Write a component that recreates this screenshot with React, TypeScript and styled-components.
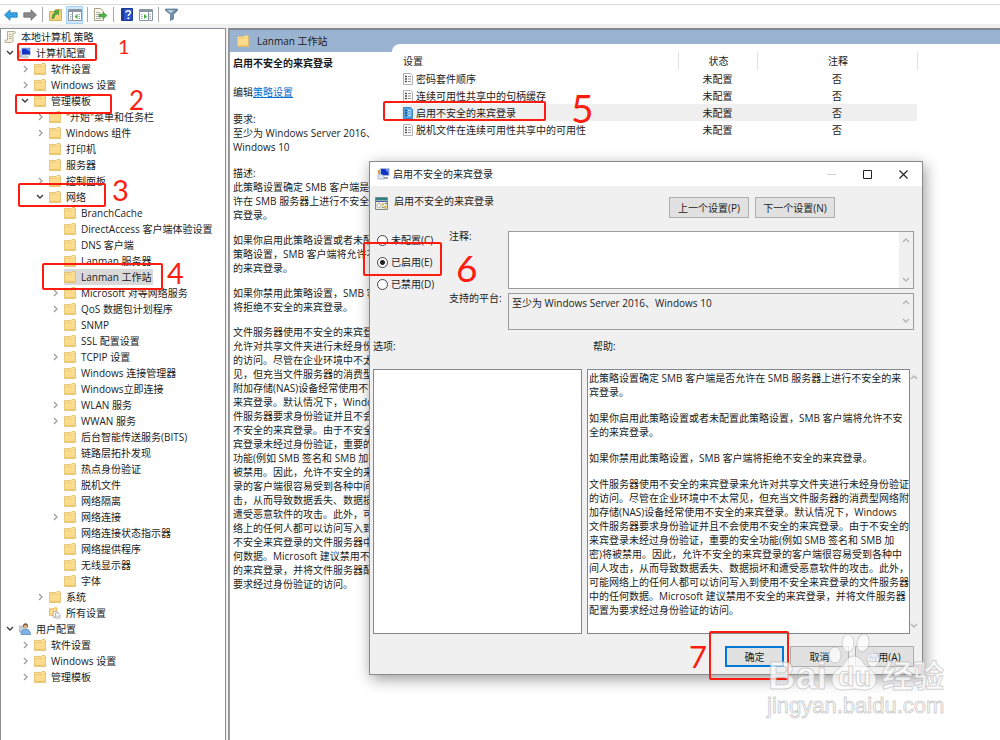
import React from 'react';
import styled, { createGlobalStyle, css } from 'styled-components';

const GlobalStyle = createGlobalStyle`
  * { box-sizing: border-box; }
  html, body { margin: 0; }
  body {
    background: #fff;
    color: #1b1b1b;
    font: 10px/14px 'Open Sans', 'Noto Sans CJK SC', sans-serif;
  }
  button, textarea, input { font: inherit; color: inherit; margin: 0; }
`;

const Page = styled.div`
  position: relative;
  display: flex;
  flex-direction: column;
  min-height: 100vh;
  overflow: hidden;
`;

/* ---------- toolbar ---------- */

const MenuEdge = styled.div`
  height: 5px;
  border-bottom: 1px solid #d9d9d9;
`;

const Toolbar = styled.div`
  display: flex;
  align-items: center;
  gap: 4px;
  height: 19px;
  padding-left: 2px;
`;

const ToolButton = styled.button<{ $active?: boolean }>`
  display: flex;
  align-items: center;
  justify-content: center;
  width: 17px;
  height: 18px;
  padding: 0;
  border: 1px solid ${(p) => (p.$active ? '#a6d3f7' : 'transparent')};
  background: ${(p) => (p.$active ? '#cfe8fb' : 'transparent')};
`;

const ToolGroup = styled.div`
  display: flex;
  align-items: center;
  gap: 2px;
`;

const ToolDivider = styled.span`
  width: 1px;
  height: 15px;
  background: #a8a8a8;
`;

const Main = styled.div`
  flex: 1;
  display: grid;
  grid-template-columns: 226px 1fr;
  column-gap: 2px;
  padding-top: 4px;
  background: #f0f0f0;
`;

/* ---------- tree ---------- */

const TreePane = styled.nav`
  background: #fff;
  border: 1px solid #8c8f96;
  border-bottom: 0;
`;

const TreeList = styled.ul`
  margin: 0;
  padding: 0;
  list-style: none;
`;

const TreeRow = styled.li<{ $level: number }>`
  display: flex;
  align-items: center;
  height: 16px;
  gap: 4px;
  padding-left: ${(p) => (p.$level === 0 ? 3 : 15 * p.$level - 11)}px;
`;

const ChevronSlot = styled.span`
  display: flex;
  justify-content: center;
  width: 10px;
`;

const TreeItem = styled.button<{ $selected?: boolean }>`
  display: flex;
  align-items: center;
  gap: 5px;
  height: 16px;
  padding: 0 2px 0 0;
  border: 0;
  background: ${(p) => (p.$selected ? '#d9d9d9' : 'transparent')};
  white-space: nowrap;
`;

/* ---------- result pane ---------- */

const ResultPane = styled.main`
  display: flex;
  flex-direction: column;
  min-width: 0;
  background: #fff;
  border-top: 2px solid #828790;
  border-left: 2px solid #9a9a9a;
`;

const ResultHeader = styled.header`
  display: flex;
  align-items: center;
  gap: 8px;
  height: 22px;
  padding-left: 7px;
  background: #9ab3d1;
`;

const ResultTitle = styled.h1`
  margin: 0;
  font-size: 10px;
  font-weight: 400;
`;

const ResultBody = styled.div`
  flex: 1;
  display: grid;
  grid-template-columns: 162px 1fr;
`;

const Description = styled.section`
  padding: 4px 0 0 3px;
  overflow: hidden;
  white-space: nowrap;
`;

const Heading = styled.h2`
  margin: 0 0 15px;
  font-size: 10px;
  font-weight: 700;
`;

const Para = styled.p<{ $gap: number }>`
  margin: 0 0 ${(p) => p.$gap}px;
  white-space: pre;
`;

const Link = styled.a`
  color: #0b6fd0;
  text-decoration: underline;
`;

const ListPane = styled.section`
  margin-top: -8px;
  padding: 8px 0 0 9px;
  background: #fff;
  border-top-left-radius: 8px;
`;

const SettingsTable = styled.table`
  border-collapse: collapse;
`;

const HeadCell = styled.th<{ $width: number; $center?: boolean }>`
  width: ${(p) => p.$width}px;
  height: 18px;
  padding: 0 0 0 2px;
  border-right: 1px solid #e2e2e2;
  font-weight: 400;
  text-align: ${(p) => (p.$center ? 'center' : 'left')};
`;

const SettingRow = styled.tr<{ $selected?: boolean }>`
  height: 17px;
  ${(p) =>
    p.$selected &&
    css`
      background: #efefef;
    `}
`;

const Cell = styled.td`
  padding: 0;
  text-align: center;
`;

const NameCell = styled.div`
  display: flex;
  align-items: center;
  gap: 3px;
  padding-left: 2px;
`;

/* ---------- dialog ---------- */

const Dialog = styled.section`
  position: absolute;
  left: 369px;
  top: 161px;
  width: 554px;
  background: #f0f0f0;
  border: 1px solid #8a8a8a;
  box-shadow: 2px 4px 14px rgba(0, 0, 0, 0.4);
`;

const TitleBar = styled.header`
  display: flex;
  align-items: center;
  gap: 3px;
  height: 24px;
  padding: 0 2px 0 7px;
  background: #fff;
`;

const TitleText = styled.h2`
  flex: 1;
  margin: 0;
  font-size: 10px;
  font-weight: 400;
`;

const WindowButton = styled.button`
  display: flex;
  align-items: center;
  justify-content: center;
  width: 33px;
  height: 22px;
  padding: 0;
  border: 0;
  background: transparent;
`;

const DialogBody = styled.div`
  display: flex;
  flex-direction: column;
  padding: 11px 8px 7px 3px;
`;

const PolicyBar = styled.div`
  display: flex;
  gap: 6px;
  height: 34px;
  padding: 0 79px 0 2px;
`;

const PolicyName = styled.span`
  flex: 1;
  margin-top: -3px;
`;

const PushButton = styled.button<{ $primary?: boolean; $width: number }>`
  width: ${(p) => p.$width}px;
  height: 21px;
  padding: 0;
  background: #e1e1e1;
  border: ${(p) => (p.$primary ? '2px solid #0078d7' : '1px solid #adadad')};
  line-height: 14px;
`;

const StateArea = styled.div`
  display: grid;
  grid-template-columns: 76px 59px 1fr;
`;

const RadioGroup = styled.div`
  display: flex;
  flex-direction: column;
  gap: 8px;
  padding: 2px 0 0 4px;
`;

const RadioLabel = styled.label`
  display: flex;
  align-items: center;
  gap: 3px;
  height: 14px;
  white-space: nowrap;
`;

const Radio = styled.input`
  appearance: none;
  width: 11px;
  height: 11px;
  border: 1px solid #444;
  border-radius: 50%;
  background: #fff;
  &:checked {
    background: radial-gradient(circle, #222 0 2px, #fff 3px);
  }
`;

const FieldLabels = styled.div`
  display: flex;
  flex-direction: column;
  gap: 48px;
  margin-top: -2px;
  white-space: nowrap;
`;

const Fields = styled.div`
  display: flex;
  flex-direction: column;
  gap: 4px;
`;

const FieldBox = styled.div<{ $height: number; $plain?: boolean }>`
  display: flex;
  height: ${(p) => p.$height}px;
  border: 1px solid #9b9b9b;
  background: ${(p) => (p.$plain ? '#f0f0f0' : '#fff')};
`;

const TextArea = styled.textarea`
  flex: 1;
  padding: 2px 3px;
  border: 0;
  outline: 0;
  resize: none;
  background: transparent;
  overflow: hidden;
`;

const ScrollTrack = styled.div`
  display: flex;
  flex-direction: column;
  justify-content: space-between;
  align-items: center;
  width: 14px;
  padding: 4px 0;
  background: #f0f0f0;
`;

const Columns = styled.div`
  display: grid;
  grid-template-columns: 209px 1fr;
  column-gap: 5px;
  margin-top: 9px;
`;

const PanelLabel = styled.h3<{ $indent?: boolean }>`
  margin: 0 0 16px;
  padding-left: ${(p) => (p.$indent ? 6 : 0)}px;
  font-size: 10px;
  font-weight: 400;
`;

const OptionsBox = styled.div`
  height: 265px;
  border: 1px solid #828790;
  background: #fff;
`;

const HelpRow = styled.div`
  display: flex;
`;

const HelpBox = styled.div`
  flex: 1;
  height: 265px;
  padding: 1px 0 0 1px;
  border: 1px solid #828790;
  background: #fff;
`;

const HelpTrack = styled(ScrollTrack)`
  width: 8px;
`;

const Buttons = styled.footer`
  display: flex;
  justify-content: flex-end;
  gap: 6px;
  margin-top: 12px;
`;

/* ---------- overlays ---------- */

const Overlay = styled.svg`
  position: absolute;
  left: 0;
  top: 0;
  pointer-events: none;
`;

/* ---------- icons ---------- */

const FolderIcon = () => (
  <svg width="12" height="12" viewBox="0 0 12 12">
    <path d="M.5 1.500h6.500l1-1h3v1h.5v10H.5z" fill="#fbdc8c" stroke="#dfbb68" strokeWidth=".8" />
    <path d="M7.500 2.500l1-1h2v1z" fill="#fffaf0" />
    <path d="M1 3.500h7l1-1h2" fill="none" stroke="#f4cd77" />
    <path d="M1 10.500h10" stroke="#f3c76a" />
  </svg>
);

const ScrollIcon = () => (
  <svg width="12" height="12" viewBox="0 0 12 12">
    <path d="M3.500.5h7c1.300 0 1.300 2 0 2H9v6.500c0 3-1.500 2.500-2 2.500H2c-1.800 0-1.800-2.500 0-2.500h1.500z" fill="#f3efdc" stroke="#a49c80" strokeWidth=".8" />
    <path d="M5 3.500h2.500M5 5.500h2.500M5 7.500h2.500" stroke="#b5ae94" />
  </svg>
);

const ComputerIcon = () => (
  <svg width="12" height="12" viewBox="0 0 12 12">
    <path d="M0 4h3v6H0z" fill="#b9c3cd" stroke="#7f8b97" strokeWidth=".6" />
    <path d="M2.500 1h9v7h-9z" fill="#1733c4" stroke="#c5cede" />
    <path d="M6 1.500h5v3z" fill="#6f9bf5" />
    <ellipse cx="6" cy="10" rx="4" ry="1.500" fill="#c7ccd4" />
  </svg>
);

const PolicyWindowIcon = () => (
  <svg width="13" height="12" viewBox="0 0 13 12">
    <circle cx="3" cy="4" r="2.400" fill="#d49a5a" />
    <path d="M3.500.5h8.500v7h-8.500z" fill="#1733c4" stroke="#aebcd8" />
    <path d="M8 1h3.500v4z" fill="#6f9bf5" />
    <path d="M1 11V7l3-1 3 2v3z" fill="#dfe7f2" stroke="#8fa5c4" strokeWidth=".7" />
    <path d="M7 10h4" stroke="#9aa4b0" strokeWidth="2" />
  </svg>
);

const UserIcon = () => (
  <svg width="12" height="12" viewBox="0 0 12 12">
    <path d="M0 3h4v6H0z" fill="#ccd3da" stroke="#9aa3ad" strokeWidth=".6" />
    <circle cx="6.500" cy="2.800" r="2.500" fill="#8a5a35" />
    <circle cx="6.500" cy="3.800" r="1.700" fill="#e4b48a" />
    <path d="M2 11.500c0-4 2-5.500 4.500-5.500s5 1.500 5 5.500z" fill="#7fb2e6" stroke="#4a7fb8" strokeWidth=".7" />
  </svg>
);

const AllSettingsIcon = () => (
  <svg width="12" height="12" viewBox="0 0 13 12">
    <path d="M.5 1.500h4l1-1h3v8h-8z" fill="#fbdd8b" stroke="#e0b75c" />
    <path d="M4.500 4.500h4l1 1v5h-5z" fill="#fff" stroke="#9c9c9c" strokeWidth=".8" />
    <path d="M7 6h3.500l1.500 1.500v4H7z" fill="#fff" stroke="#9c9c9c" strokeWidth=".8" />
    <path d="M8 9.500h3" stroke="#aaa" />
  </svg>
);

const SettingIcon = ({ selected }: { selected?: boolean }) => (
  <svg width="10" height="12" viewBox="0 0 10 12">
    <path d="M.5.5h7l2 2v9h-9z" fill={selected ? '#5aa7e6' : '#fff'} stroke={selected ? '#3b86c8' : '#b0b0b0'} />
    <path d="M2 3.500h2M2 6h2M2 8.500h2" stroke={selected ? '#0c4f91' : '#4d4d4d'} strokeWidth="1.300" />
    <path d="M5 3.500h3M5 6h3M5 8.500h3" stroke={selected ? '#cfe6fa' : '#8f8f8f'} />
  </svg>
);

const PolicySheetIcon = () => (
  <svg width="13" height="13" viewBox="0 0 13 13">
    <path d="M.5.5h12v12H.5z" fill="#eceadb" stroke="#7b8a88" />
    <path d="M1 1h11v2.500H1z" fill="#2f7f86" />
    <path d="M1 4.500h11" stroke="#4c5aa8" />
    <circle cx="4" cy="8.500" r="2" fill="#fff" stroke="#999" strokeWidth=".7" />
    <path d="M7 6.500h2v2H7zM9 9h2.500v2.500H9z" fill="#d8b65b" />
    <path d="M10 6.500h2M7 10.500h1.500" stroke="#5b8a5b" />
  </svg>
);

const Chevron = ({ dir, color }: { dir: 'up' | 'down' | 'right'; color: string }) => {
  const d = { up: 'M1 6l3-3 3 3', down: 'M1 2l3 3 3-3', right: 'M3 1l3 3-3 3' }[dir];
  return (
    <svg width="8" height="8" viewBox="0 0 8 8">
      <path d={d} fill="none" stroke={color} strokeWidth="1.400" />
    </svg>
  );
};

const ScrollArrows = () => (
  <>
    <Chevron dir="up" color="#b4b4b4" />
    <Chevron dir="down" color="#b4b4b4" />
  </>
);

const ArrowIcon = ({ forward }: { forward?: boolean }) => (
  <svg width="14" height="12" viewBox="0 0 14 12">
    <path
      d={forward ? 'M13.500 6L8 .8v3H.8v4.400H8v3z' : 'M.5 6L6 .8v3h7.200v4.400H6v3z'}
      fill={forward ? '#8a8a8a' : '#35a3e3'}
      stroke={forward ? '#6d6d6d' : '#1b7dbd'}
      strokeWidth=".8"
    />
  </svg>
);

const FolderUpIcon = () => (
  <svg width="13" height="13" viewBox="0 0 13 13">
    <path d="M.5 3.500h5l1-2h6v11H.5z" fill="#f3d27a" stroke="#c9a245" strokeWidth=".8" />
    <path d="M3 10.500c0-3 1-5 3-6L5 3l5-1-.5 5-1.300-1.300C6.500 6.500 5 8 5 10.500z" fill="#4aa83a" stroke="#2f8125" strokeWidth=".4" />
  </svg>
);

const PanelIcon = ({ right }: { right?: boolean }) => (
  <svg width="14" height="12" viewBox="0 0 14 12">
    <path d="M.5.500h13v11H.5z" fill="#fff" stroke="#8b95a1" />
    <path d="M1 2h12" stroke="#8b95a1" strokeWidth="2" />
    <path d={right ? 'M9.500 3v9' : 'M4.500 3v9'} stroke="#8b95a1" />
    <path d="M2 5.500h1.500M2 7.500h1.500M2 9.500h1.500M10.500 5.500H12M10.500 7.500H12M10.500 9.500H12" stroke="#9aa7b5" />
    <path d={right ? 'M5 5v5l3-2.500z' : 'M9.500 5v5L6.500 7.500z'} fill="#3fae3a" />
  </svg>
);

const ExportIcon = () => (
  <svg width="13" height="13" viewBox="0 0 13 13">
    <path d="M.5.5h6l3 3v9h-9z" fill="#fdf9e8" stroke="#a79f86" />
    <path d="M2 4.500h4M2 6.500h3M2 8.500h3M2 10.500h5" stroke="#a7b0b8" />
    <path d="M5 6h4V4l4 3.500L9 11V9H5z" fill="#4db348" stroke="#2f8a2c" strokeWidth=".5" />
  </svg>
);

const HelpIcon = () => (
  <svg width="12" height="13" viewBox="0 0 12 13">
    <path d="M.5.500h11v12H.5z" fill="#2f55c8" stroke="#1d3a93" />
    <path d="M1 1h2v11H1z" fill="#1d3a93" />
    <path d="M5 4.500C5 2 9.500 2 9.500 4.500 9.500 6 7.300 6 7.300 8" fill="none" stroke="#fff" strokeWidth="1.500" />
    <circle cx="7.300" cy="10.200" r="1" fill="#fff" />
  </svg>
);

const FilterIcon = () => (
  <svg width="13" height="13" viewBox="0 0 13 13">
    <path d="M.5 1h12v1.500L8.500 6.500V11l-3 1.500v-6L.5 2.500z" fill="#6f8da8" stroke="#58748e" strokeWidth=".7" />
    <path d="M2 2h7L6 5.500z" fill="#b8cbdb" />
  </svg>
);

/* ---------- data ---------- */

type Node = {
  level: number;
  text: string;
  state?: 'open' | 'closed';
  icon?: React.ReactNode;
  selected?: boolean;
};

const nodes: Node[] = [
  { level: 0, text: '本地计算机 策略', icon: <ScrollIcon /> },
  { level: 1, text: '计算机配置', state: 'open', icon: <ComputerIcon /> },
  { level: 2, text: '软件设置', state: 'closed' },
  { level: 2, text: 'Windows 设置', state: 'closed' },
  { level: 2, text: '管理模板', state: 'open' },
  { level: 3, text: '"开始"菜单和任务栏', state: 'closed' },
  { level: 3, text: 'Windows 组件', state: 'closed' },
  { level: 3, text: '打印机' },
  { level: 3, text: '服务器' },
  { level: 3, text: '控制面板', state: 'closed' },
  { level: 3, text: '网络', state: 'open' },
  { level: 4, text: 'BranchCache' },
  { level: 4, text: 'DirectAccess 客户端体验设置' },
  { level: 4, text: 'DNS 客户端' },
  { level: 4, text: 'Lanman 服务器' },
  { level: 4, text: 'Lanman 工作站', selected: true },
  { level: 4, text: 'Microsoft 对等网络服务', state: 'closed' },
  { level: 4, text: 'QoS 数据包计划程序', state: 'closed' },
  { level: 4, text: 'SNMP' },
  { level: 4, text: 'SSL 配置设置' },
  { level: 4, text: 'TCPIP 设置', state: 'closed' },
  { level: 4, text: 'Windows 连接管理器' },
  { level: 4, text: 'Windows立即连接' },
  { level: 4, text: 'WLAN 服务', state: 'closed' },
  { level: 4, text: 'WWAN 服务', state: 'closed' },
  { level: 4, text: '后台智能传送服务(BITS)' },
  { level: 4, text: '链路层拓扑发现' },
  { level: 4, text: '热点身份验证' },
  { level: 4, text: '脱机文件' },
  { level: 4, text: '网络隔离' },
  { level: 4, text: '网络连接', state: 'closed' },
  { level: 4, text: '网络连接状态指示器' },
  { level: 4, text: '网络提供程序' },
  { level: 4, text: '无线显示器' },
  { level: 4, text: '字体' },
  { level: 3, text: '系统', state: 'closed' },
  { level: 3, text: '所有设置', icon: <AllSettingsIcon /> },
  { level: 1, text: '用户配置', state: 'open', icon: <UserIcon /> },
  { level: 2, text: '软件设置', state: 'closed' },
  { level: 2, text: 'Windows 设置', state: 'closed' },
  { level: 2, text: '管理模板', state: 'closed' },
];

const settings = ['密码套件顺序', '连续可用性共享中的句柄缓存', '启用不安全的来宾登录', '脱机文件在连续可用性共享中的可用性'];

const description = [
  '描述:\n此策略设置确定 SMB 客户端是否允\n许在 SMB 服务器上进行不安全的来\n宾登录。',
  '如果你启用此策略设置或者未配置此\n策略设置，SMB 客户端将允许不安全\n的来宾登录。',
  '如果你禁用此策略设置，SMB 客户端\n将拒绝不安全的来宾登录。',
  '文件服务器使用不安全的来宾登录来\n允许对共享文件夹进行未经身份验证\n的访问。尽管在企业环境中不太常\n见，但充当文件服务器的消费型网络\n附加存储(NAS)设备经常使用不安全的\n来宾登录。默认情况下，Windows 文\n件服务器要求身份验证并且不会使用\n不安全的来宾登录。由于不安全的来\n宾登录未经过身份验证，重要的安全\n功能(例如 SMB 签名和 SMB 加密)将\n被禁用。因此，允许不安全的来宾登\n录的客户端很容易受到各种中间人攻\n击，从而导致数据丢失、数据损坏和\n遭受恶意软件的攻击。此外，可能网\n络上的任何人都可以访问写入到使用\n不安全来宾登录的文件服务器中的任\n何数据。Microsoft 建议禁用不安全\n的来宾登录，并将文件服务器配置为\n要求经过身份验证的访问。',
];

const help = [
  '此策略设置确定 SMB 客户端是否允许在 SMB 服务器上进行不安全的来\n宾登录。',
  '如果你启用此策略设置或者未配置此策略设置，SMB 客户端将允许不安\n全的来宾登录。',
  '如果你禁用此策略设置，SMB 客户端将拒绝不安全的来宾登录。',
  '文件服务器使用不安全的来宾登录来允许对共享文件夹进行未经身份验证\n的访问。尽管在企业环境中不太常见，但充当文件服务器的消费型网络附\n加存储(NAS)设备经常使用不安全的来宾登录。默认情况下，Windows\n文件服务器要求身份验证并且不会使用不安全的来宾登录。由于不安全的\n来宾登录未经过身份验证，重要的安全功能(例如 SMB 签名和 SMB 加\n密)将被禁用。因此，允许不安全的来宾登录的客户端很容易受到各种中\n间人攻击，从而导致数据丢失、数据损坏和遭受恶意软件的攻击。此外，\n可能网络上的任何人都可以访问写入到使用不安全来宾登录的文件服务器\n中的任何数据。Microsoft 建议禁用不安全的来宾登录，并将文件服务器\n配置为要求经过身份验证的访问。',
];

const marks = [
  { box: [18, 44, 78, 16], n: '1', x: 118, y: 54, size: 20 },
  { box: [16, 95, 95, 18], n: '2', x: 129, y: 110, size: 26 },
  { box: [19, 184, 86, 22], n: '3', x: 112, y: 201, size: 29 },
  { box: [43, 264, 119, 25], n: '4', x: 167, y: 284, size: 29 },
  { box: [384, 102, 161, 18], n: '5', x: 571, y: 123, size: 39 },
  { box: [364, 243, 77, 32], n: '6', x: 456, y: 282, size: 37 },
  { box: [710, 632, 78, 47], n: '7', x: 689, y: 668, size: 31 },
];

/* ---------- parts ---------- */

const Annotations = () => (
  <Overlay width="1000" height="740" viewBox="0 0 1000 740">
    {marks.map((m) => (
      <g key={m.n}>
        <rect x={m.box[0]} y={m.box[1]} width={m.box[2]} height={m.box[3]} rx="1" fill="none" stroke="#fd1d10" strokeWidth="2" />
        <text x={m.x} y={m.y} fontSize={m.size} fontFamily="Lato, sans-serif" fill="#fd1d10">
          {m.n}
        </text>
      </g>
    ))}
  </Overlay>
);

const Watermark = () => (
  <Overlay width="1000" height="740" viewBox="0 0 1000 740">
    <g
      fill="#fff"
      fillOpacity=".72"
      stroke="#bdbdbd"
      strokeOpacity=".7"
      strokeWidth="1"
      fontFamily="'Liberation Sans', 'Noto Sans CJK SC', sans-serif"
      fontWeight="700"
    >
      <text x="768" y="689" fontSize="38">
        Bai
      </text>
      <ellipse cx="835" cy="655" rx="6" ry="8" />
      <ellipse cx="848" cy="643" rx="6" ry="9" />
      <ellipse cx="863" cy="643" rx="6" ry="9" transform="rotate(12 863 643)" />
      <ellipse cx="873" cy="659" rx="6" ry="8" />
      <path d="M854 656c5 0 8 5 11 9 5 4 11 8 11 15 0 6-4 10-11 10-5 0-7-1-11-1s-7 1-12 1c-6 0-10-4-10-10 0-8 6-10 11-15 3-4 6-9 11-9z" />
      <text x="838" y="686" fontSize="27">
        du
      </text>
      <text x="882" y="687" fontSize="31">
        经验
      </text>
      <text x="767" y="713" fontSize="22" fontWeight="400">
        jingyan.baidu.com
      </text>
    </g>
  </Overlay>
);

export default function App() {
  return (
    <Page>
      <GlobalStyle />
      <MenuEdge />
      <Toolbar role="toolbar">
        <ToolGroup>
          <ToolButton aria-label="后退"><ArrowIcon /></ToolButton>
          <ToolButton aria-label="前进"><ArrowIcon forward /></ToolButton>
        </ToolGroup>
        <ToolDivider />
        <ToolGroup>
          <ToolButton aria-label="上移"><FolderUpIcon /></ToolButton>
          <ToolButton aria-label="显示控制台树" $active><PanelIcon /></ToolButton>
        </ToolGroup>
        <ToolDivider />
        <ToolButton aria-label="导出列表"><ExportIcon /></ToolButton>
        <ToolDivider />
        <ToolGroup>
          <ToolButton aria-label="帮助主题"><HelpIcon /></ToolButton>
          <ToolButton aria-label="显示操作窗格"><PanelIcon right /></ToolButton>
        </ToolGroup>
        <ToolDivider />
        <ToolButton aria-label="筛选器"><FilterIcon /></ToolButton>
      </Toolbar>

      <Main>
        <TreePane>
          <TreeList>
            {nodes.map((n, i) => (
              <TreeRow key={i} $level={n.level}>
                {n.level > 0 && (
                  <ChevronSlot>
                    {n.state && (
                      <Chevron dir={n.state === 'open' ? 'down' : 'right'} color={n.state === 'open' ? '#3c3c3c' : '#a0a0a0'} />
                    )}
                  </ChevronSlot>
                )}
                <TreeItem $selected={n.selected}>
                  {n.icon ?? <FolderIcon />}
                  <span>{n.text}</span>
                </TreeItem>
              </TreeRow>
            ))}
          </TreeList>
        </TreePane>

        <ResultPane>
          <ResultHeader>
            <FolderIcon />
            <ResultTitle>Lanman 工作站</ResultTitle>
          </ResultHeader>
          <ResultBody>
            <Description>
              <Heading>启用不安全的来宾登录</Heading>
              <Para $gap={13}>
                编辑<Link href="#policy">策略设置</Link>
              </Para>
              <Para $gap={12}>{'要求:\n至少为 Windows Server 2016、\nWindows 10'}</Para>
              {description.map((p) => (
                <Para key={p} $gap={11}>
                  {p}
                </Para>
              ))}
            </Description>
            <ListPane>
              <SettingsTable>
                <thead>
                  <tr>
                    <HeadCell $width={277}>设置</HeadCell>
                    <HeadCell $width={79} $center>状态</HeadCell>
                    <HeadCell $width={160} $center>注释</HeadCell>
                  </tr>
                </thead>
                <tbody>
                  {settings.map((s, i) => (
                    <SettingRow key={s} $selected={i === 2}>
                      <Cell>
                        <NameCell>
                          <SettingIcon selected={i === 2} />
                          {s}
                        </NameCell>
                      </Cell>
                      <Cell>未配置</Cell>
                      <Cell>否</Cell>
                    </SettingRow>
                  ))}
                </tbody>
              </SettingsTable>
            </ListPane>
          </ResultBody>
        </ResultPane>
      </Main>

      <Dialog role="dialog" aria-label="启用不安全的来宾登录">
        <TitleBar>
          <PolicyWindowIcon />
          <TitleText>启用不安全的来宾登录</TitleText>
          <WindowButton aria-label="最小化">
            <svg width="9" height="9"><path d="M0 4.500h9" stroke="#cfcfcf" /></svg>
          </WindowButton>
          <WindowButton aria-label="最大化">
            <svg width="9" height="9"><path d="M.5.500h8v8h-8z" fill="none" stroke="#222" /></svg>
          </WindowButton>
          <WindowButton aria-label="关闭">
            <svg width="9" height="9"><path d="M.5.500l8 8M8.500.500l-8 8" stroke="#222" strokeWidth="1.100" /></svg>
          </WindowButton>
        </TitleBar>
        <DialogBody>
          <PolicyBar>
            <PolicySheetIcon />
            <PolicyName>启用不安全的来宾登录</PolicyName>
            <PushButton $width={80}>上一个设置(P)</PushButton>
            <PushButton $width={80}>下一个设置(N)</PushButton>
          </PolicyBar>

          <StateArea>
            <RadioGroup>
              <RadioLabel><Radio type="radio" name="state" />未配置(C)</RadioLabel>
              <RadioLabel><Radio type="radio" name="state" defaultChecked />已启用(E)</RadioLabel>
              <RadioLabel><Radio type="radio" name="state" />已禁用(D)</RadioLabel>
            </RadioGroup>
            <FieldLabels>
              <label htmlFor="comment">注释:</label>
              <label htmlFor="platform">支持的平台:</label>
            </FieldLabels>
            <Fields>
              <FieldBox $height={58}>
                <TextArea id="comment" />
                <ScrollTrack><ScrollArrows /></ScrollTrack>
              </FieldBox>
              <FieldBox $height={37} $plain>
                <TextArea id="platform" readOnly defaultValue="至少为 Windows Server 2016、Windows 10" />
                <ScrollTrack><ScrollArrows /></ScrollTrack>
              </FieldBox>
            </Fields>
          </StateArea>

          <Columns>
            <div>
              <PanelLabel>选项:</PanelLabel>
              <OptionsBox />
            </div>
            <div>
              <PanelLabel $indent>帮助:</PanelLabel>
              <HelpRow>
                <HelpBox>
                  {help.map((p) => (
                    <Para key={p} $gap={12}>
                      {p}
                    </Para>
                  ))}
                </HelpBox>
                <HelpTrack><ScrollArrows /></HelpTrack>
              </HelpRow>
            </div>
          </Columns>

          <Buttons>
            <PushButton $width={59} $primary>确定</PushButton>
            <PushButton $width={59}>取消</PushButton>
            <PushButton $width={59}>应用(A)</PushButton>
          </Buttons>
        </DialogBody>
      </Dialog>

      <Annotations />
      <Watermark />
    </Page>
  );
}
